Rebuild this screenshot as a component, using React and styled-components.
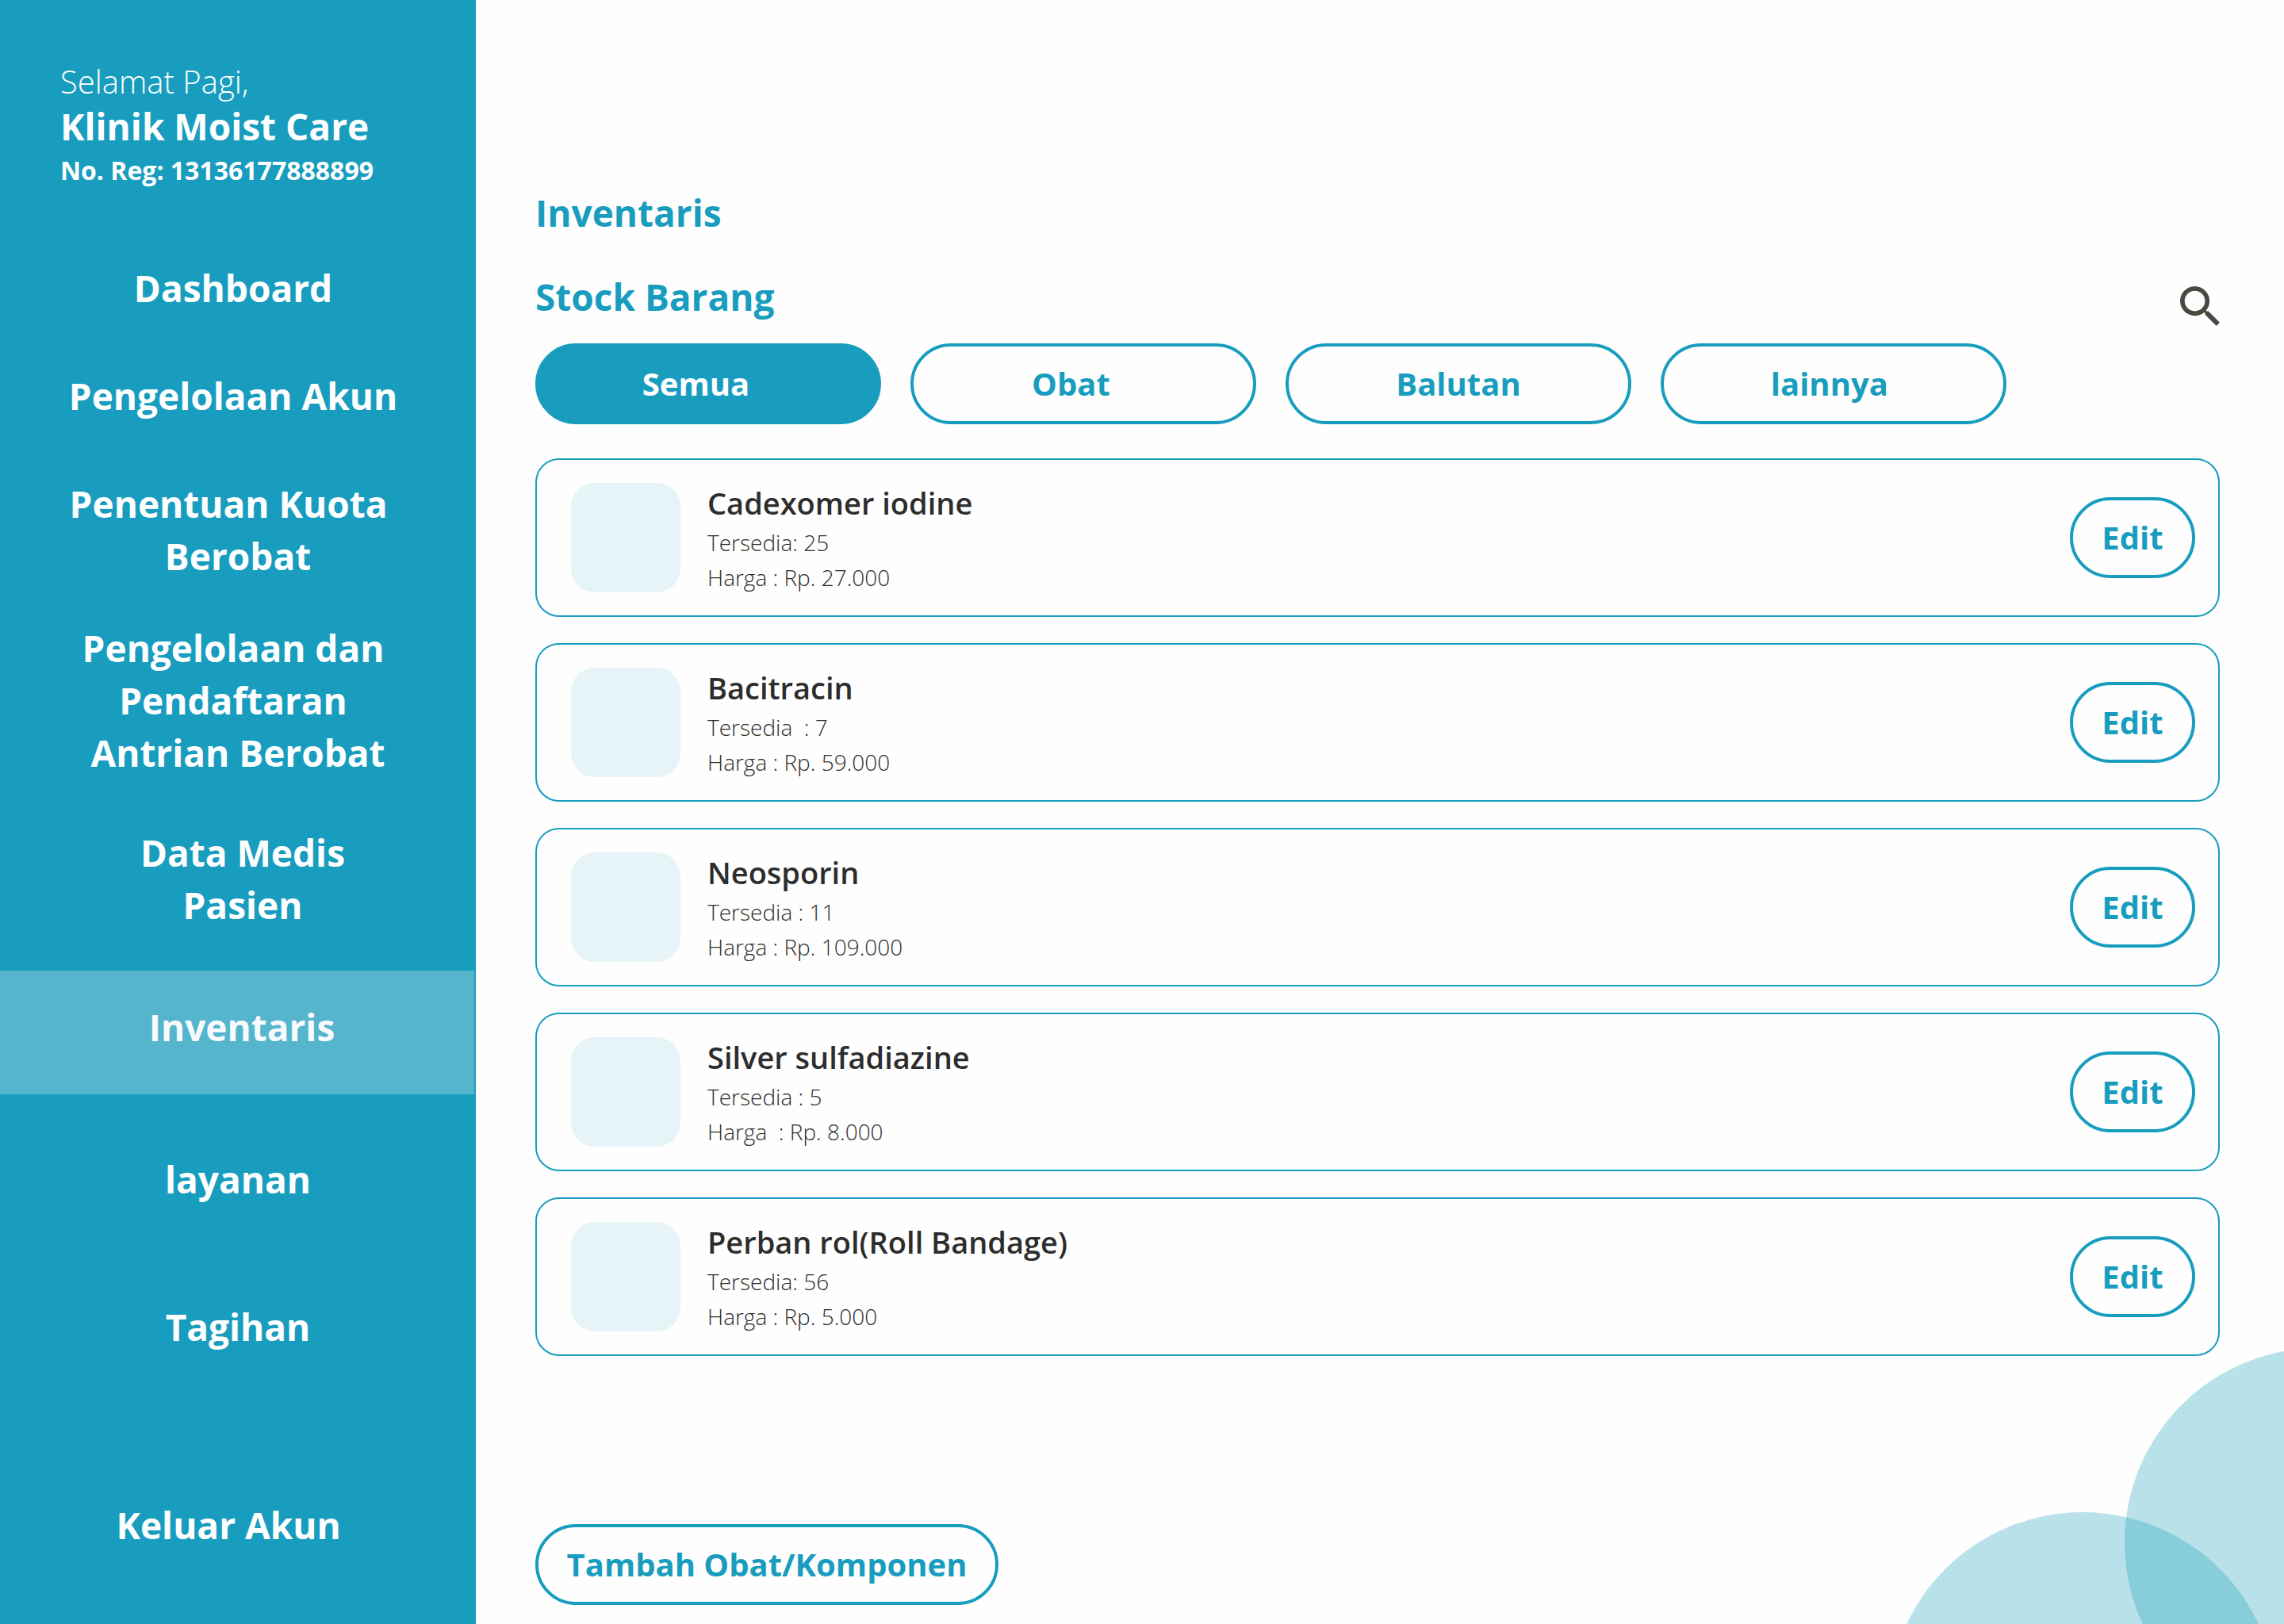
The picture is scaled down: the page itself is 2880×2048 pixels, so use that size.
import React, { useState } from "react";
import styled, { createGlobalStyle, css } from "styled-components";

const teal = "#189dbf";
const ink = "#2d2d2d";

const GlobalStyle = createGlobalStyle`
  *, *::before, *::after { box-sizing: border-box; }
  body {
    margin: 0;
    background: #fefefe;
    color: ${ink};
    font-family: "Open Sans", "Noto Sans", sans-serif;
  }
  h1, h2, h3, p, ul { margin: 0; padding: 0; }
  ul { list-style: none; }
  button { font-family: inherit; cursor: pointer; }
`;

const Page = styled.div`
  display: flex;
  min-height: 100vh;
`;

const Sidebar = styled.aside`
  display: flex;
  flex-direction: column;
  flex: none;
  width: 600px;
  padding: 75px 0 92px;
  background: ${teal};
  color: #fff;
`;

const Clinic = styled.header`
  padding: 0 76px;
  margin-bottom: 87px;
  line-height: 56px;
`;

const Greeting = styled.p`
  font-size: 40px;
  font-weight: 300;
`;

const ClinicName = styled.p`
  font-size: 46px;
  font-weight: 700;
`;

const Registration = styled.p`
  font-size: 32px;
  font-weight: 700;
`;

const Nav = styled.nav`
  display: flex;
  flex-direction: column;
  flex: 1;
`;

const NavLink = styled.a`
  display: block;
  margin-top: ${(p) => p.$gap}px;
  color: #fff;
  font-size: 46px;
  font-weight: 700;
  line-height: 66px;
  text-align: center;
  text-decoration: none;
  white-space: pre;

  ${(p) =>
    p.$last &&
    css`
      margin-top: auto;
    `}

  ${(p) =>
    p.$active &&
    css`
      margin-right: 2px;
      padding: 38px 0 52px;
      background: #55b5cd;
      color: #f8fbfd;
    `}
`;

const Main = styled.main`
  position: relative;
  display: flex;
  flex-direction: column;
  flex: 1;
  min-width: 0;
  padding: 235px 81px 24px 75px;
  overflow: hidden;
`;

const Bubble = styled.span`
  position: absolute;
  right: ${(p) => p.$right}px;
  bottom: ${(p) => p.$bottom}px;
  width: 490px;
  height: 490px;
  border-radius: 50%;
  background: rgba(24, 158, 185, 0.3);
  pointer-events: none;
`;

const Title = styled.h1`
  margin-bottom: 40px;
  color: ${teal};
  font-size: 46px;
  font-weight: 700;
  line-height: 66px;
`;

const SectionBar = styled.div`
  display: flex;
  justify-content: space-between;
  align-items: flex-start;
  margin-bottom: 22px;
`;

const SectionTitle = styled.h2`
  color: ${teal};
  font-size: 46px;
  font-weight: 700;
  line-height: 66px;
`;

const SearchButton = styled.button`
  display: flex;
  padding: 20px 0 0;
  border: 0;
  background: none;
  color: #4a4840;

  svg {
    width: 50px;
    height: 50px;
  }
`;

const Pill = styled.button`
  flex: none;
  height: 102px;
  width: ${(p) => p.$width}px;
  padding: 0;
  border: 4px solid ${teal};
  border-radius: 51px;
  background: ${(p) => (p.$filled ? teal : "#fefefe")};
  color: ${(p) => (p.$filled ? "#fff" : teal)};
  font-size: 40px;
  font-weight: 700;
  line-height: 56px;
  white-space: pre;
`;

const Filters = styled.div`
  display: flex;
  gap: 37px;
  margin-bottom: 43px;
`;

const StockList = styled.ul`
  display: flex;
  flex-direction: column;
  gap: 33px;
  margin-bottom: 60px;
`;

const StockCard = styled.li`
  display: flex;
  align-items: center;
  gap: 34px;
  height: 200px;
  padding: 0 29px 0 43px;
  border: 2px solid ${teal};
  border-radius: 30px;
  background: #fefefe;
`;

const Thumbnail = styled.div`
  flex: none;
  width: 138px;
  height: 138px;
  border-radius: 30px;
  background: #e6f4f8;
`;

const Details = styled.div`
  flex: 1;
  min-width: 0;
`;

const ItemName = styled.h3`
  font-size: 38px;
  font-weight: 650;
  line-height: 56px;
`;

const ItemFact = styled.p`
  font-size: 28px;
  font-weight: 300;
  line-height: 44px;
  white-space: pre;
`;

const Footer = styled.footer`
  display: flex;
  margin-top: auto;
`;

const menu = [
  { label: "Dashboard ", gap: 0 },
  { label: "Pengelolaan Akun ", gap: 70 },
  { label: "Penentuan Kuota  \nBerobat", gap: 70 },
  { label: "Pengelolaan dan \nPendaftaran \nAntrian Berobat", gap: 50 },
  { label: " Data Medis\n Pasien", gap: 60 },
  { label: " Inventaris", gap: 50 },
  { label: "layanan", gap: 74 },
  { label: "Tagihan", gap: 120 },
  { label: "Keluar Akun  ", last: true },
];

const filters = ["Semua   ", "Obat   ", "Balutan", "lainnya "];

const items = [
  { name: "Cadexomer iodine", stock: "Tersedia: 25", price: "Harga : Rp. 27.000" },
  { name: "Bacitracin", stock: "Tersedia  : 7", price: "Harga : Rp. 59.000" },
  { name: "Neosporin", stock: "Tersedia : 11", price: "Harga : Rp. 109.000" },
  { name: "Silver sulfadiazine", stock: "Tersedia : 5", price: "Harga  : Rp. 8.000" },
  { name: "Perban rol(Roll Bandage)", stock: "Tersedia: 56", price: "Harga : Rp. 5.000" },
];

function SearchIcon() {
  return (
    <svg viewBox="3 3 17.5 17.5" fill="currentColor" aria-hidden="true">
      <path d="M15.5 14h-.79l-.28-.27C15.41 12.59 16 11.11 16 9.5 16 5.91 13.09 3 9.5 3S3 5.91 3 9.5 5.91 16 9.5 16c1.61 0 3.09-.59 4.23-1.57l.27.28v.79l5 4.99L20.49 19l-4.99-5zm-6 0C7.01 14 5 11.99 5 9.5S7.01 5 9.5 5 14 7.01 14 9.5 11.99 14 9.5 14z" />
    </svg>
  );
}

export default function App() {
  const [filter, setFilter] = useState(filters[0]);

  return (
    <>
      <GlobalStyle />
      <Page>
        <Sidebar>
          <Clinic>
            <Greeting>Selamat Pagi,</Greeting>
            <ClinicName>Klinik Moist Care</ClinicName>
            <Registration>No. Reg: 13136177888899</Registration>
          </Clinic>
          <Nav>
            {menu.map((m) => {
              const active = m.label.trim() === "Inventaris";
              return (
                <NavLink
                  key={m.label}
                  href="#"
                  $gap={m.gap}
                  $last={m.last}
                  $active={active}
                  aria-current={active ? "page" : undefined}
                >
                  {m.label}
                </NavLink>
              );
            })}
          </Nav>
        </Sidebar>
        <Main>
          <Title>Inventaris</Title>
          <SectionBar>
            <SectionTitle>Stock Barang</SectionTitle>
            <SearchButton type="button" aria-label="Cari">
              <SearchIcon />
            </SearchButton>
          </SectionBar>
          <Filters>
            {filters.map((f) => (
              <Pill
                key={f}
                type="button"
                $width={436}
                $filled={f === filter}
                aria-pressed={f === filter}
                onClick={() => setFilter(f)}
              >
                {f}
              </Pill>
            ))}
          </Filters>
          <StockList>
            {items.map((item) => (
              <StockCard key={item.name}>
                <Thumbnail />
                <Details>
                  <ItemName>{item.name}</ItemName>
                  <ItemFact>{item.stock}</ItemFact>
                  <ItemFact>{item.price}</ItemFact>
                </Details>
                <Pill type="button" $width={158}>
                  Edit
                </Pill>
              </StockCard>
            ))}
          </StockList>
          <Footer>
            <Pill type="button" $width={584}>
              Tambah Obat/Komponen
            </Pill>
          </Footer>
          <Bubble $right={-289} $bottom={-142} />
          <Bubble $right={9} $bottom={-349} />
        </Main>
      </Page>
    </>
  );
}
